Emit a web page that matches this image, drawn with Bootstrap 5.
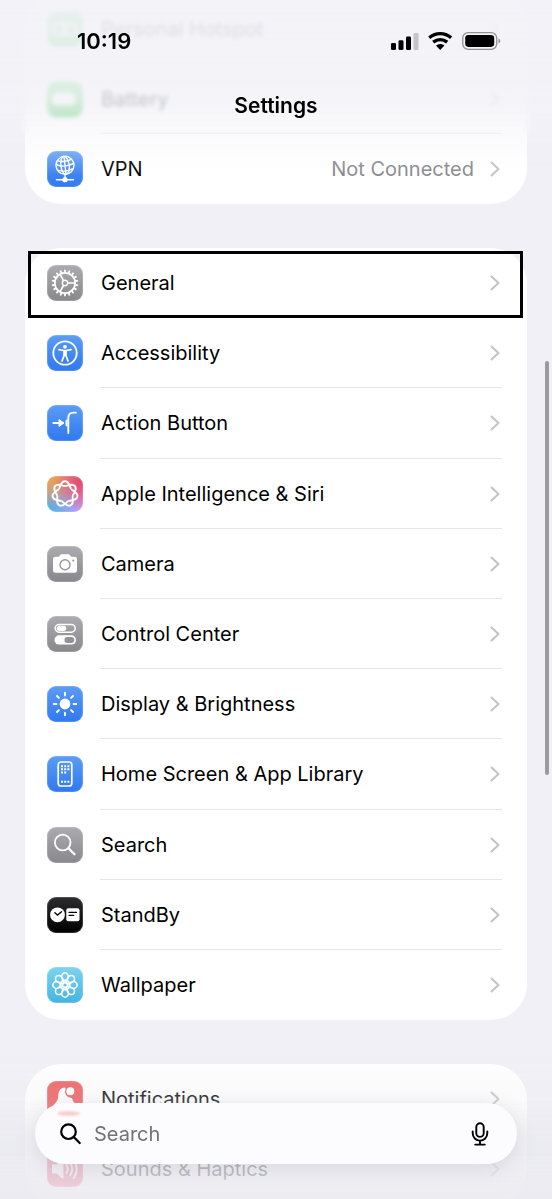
<!DOCTYPE html>
<html lang="en">
<head>
<meta charset="utf-8">
<meta name="viewport" content="width=device-width, initial-scale=1">
<title>Settings</title>
<link rel="stylesheet" href="https://cdn.jsdelivr.net/npm/bootstrap@5.3.0/dist/css/bootstrap.min.css">
<style>
  body { background: #f0f0f6; color: #000; font-family: Inter, "Liberation Sans", sans-serif; font-size: 20px; line-height: 28px; }
  .screen { height: 100vh; overflow: hidden; }
  .groups { padding: 0 25px; gap: 44px; }
  .scrolled { margin-top: -6px; }
  .group { border-radius: 36px; flex: none; background: #fff; }
  .group-main { min-height: 772px; }
  .setting { flex: 1 0 70px; padding-left: 22px; padding-right: 25px; gap: 18px; color: #000; text-decoration: none; position: relative; }
  .setting + .setting::before { content: ""; position: absolute; top: -1px; left: 75px; right: 25px; height: 1px; background: #e6e6e8; }
  .value { color: #8a8a8e; margin-right: -2px; }
  .tile { width: 36px; height: 36px; border-radius: 9px; flex: none; box-shadow: inset 0 0 1px 1px rgba(255,255,255,.18); }
  .tile svg { width: 36px; height: 36px; display: block; }
  .t-blue { background: linear-gradient(#5b9cf6, #2f78f0); }
  .t-gray { background: linear-gradient(#acacb0, #88888c); }
  .t-green { background: linear-gradient(#6ad878, #35c14b); }
  .t-black { background: linear-gradient(#2c2c2e, #000); }
  .t-cyan { background: linear-gradient(#7dd3f0, #43b5e0); }
  .t-red { background: linear-gradient(#ec5a5c, #ee4b4e); }
  .t-pink { background: linear-gradient(#f0506e, #ee3a5e); }
  .t-ai { background: radial-gradient(circle at 100% 15%, #e93f68 0, rgba(233,63,104,0) 62%), radial-gradient(circle at 10% 0, #f2a040 0, rgba(242,160,64,0) 65%), radial-gradient(circle at 0 100%, #43b4f3 0, rgba(67,180,243,0) 70%), radial-gradient(circle at 80% 100%, #c79bfa 0, rgba(199,155,250,0) 65%), #cf98b4; }
  .chev { width: 10px; height: 16px; flex: none; margin-right: 2px; }
  .focus-box { position: absolute; top: 3px; right: 4px; bottom: 0; left: 3px; border: 3px solid #000; z-index: 2; }
  .top-blur { height: 134px; backdrop-filter: blur(2px); z-index: 3; }
  .top-fade { height: 175px; z-index: 3; background: linear-gradient(rgba(242,242,247,.93) 0, rgba(242,242,247,.88) 80px, rgba(243,243,248,.76) 112px, rgba(243,243,248,.42) 130px, rgba(244,244,248,0)); }
  .top-bar { z-index: 4; }
  .status { height: 82px; padding: 0 51px 0 77px; }
  .clock { font-size: 22px; font-weight: 600; }
  .page-title { font-size: 21px; line-height: 28px; font-weight: 600; margin-top: 10px; }
  .bottom-fade { height: 150px; z-index: 3; background: linear-gradient(rgba(234,234,240,0), rgba(236,236,240,.26) 50px, rgba(232,232,238,.72) 98px, rgba(235,235,240,.88)); }
  .search-wrap { z-index: 4; padding: 0 35px 35px; }
  .search-pill { height: 61px; border-radius: 31px; background: #fcfcfe; padding: 0 27px 0 25px; gap: 13px; box-shadow: 0 4px 20px rgba(70,70,90,.13); position: relative; }
  .search-pill::before { content: ""; position: absolute; left: 22px; top: 8px; width: 23px; height: 5px; border-radius: 50%; background: #f9ccd0; filter: blur(1px); }
  .search-field { border: 0; background: transparent; outline: 0; padding: 0; min-width: 0; color: #727277; }
  .search-field::placeholder { color: #727277; opacity: 1; }
  .scroll-thumb { top: 361px; right: 3px; width: 4px; height: 414px; border-radius: 2px; background: #9b9b9f; z-index: 2; }
</style>
</head>
<body>
<svg width="0" height="0" class="position-absolute" aria-hidden="true">
  <defs>
    <symbol id="chev" viewBox="0 0 10 16"><path d="M1.5 1.5 8.500 8l-7 6.500" fill="none" stroke="#c3c3c7" stroke-width="2" stroke-linecap="round" stroke-linejoin="round"/></symbol>
    <path id="lobe" d="M-6.200-5C-4.400-7.300-4.400-12.700 0-12.700S4.400-7.300 6.200-5"/>
    <g id="petal"><path d="M-.8-2.400-2.400-6.500A3.300 3.300 0 1 1 2.400-6.500L.8-2.400"/><circle cy="-4.600" r=".5"/></g>
    <path id="teeth" d="M0-13.300V-10.500"/>
    <path id="ray" d="M0-11.300V-8.600"/>
  </defs>
</svg>

<main class="screen position-relative">
  <div class="groups d-flex flex-column">
    <nav class="group scrolled d-flex flex-column" aria-label="Connections">
      <a href="#" class="setting d-flex align-items-center">
        <span class="tile t-green"><svg viewBox="0 0 36 36" fill="none" stroke="#fff" stroke-width="2.400"><rect x="6" y="13" width="14" height="10" rx="5"/><rect x="16" y="13" width="14" height="10" rx="5"/></svg></span>
        <span class="flex-grow-1">Personal Hotspot</span><svg class="chev"><use href="#chev"/></svg></a>
      <a href="#" class="setting d-flex align-items-center">
        <span class="tile t-green"><svg viewBox="0 0 36 36" fill="#fff"><rect x="5" y="12" width="23" height="12" rx="4"/><rect x="29" y="16" width="2" height="4" rx="1"/></svg></span>
        <span class="flex-grow-1">Battery</span><svg class="chev"><use href="#chev"/></svg></a>
      <a href="#" class="setting d-flex align-items-center">
        <span class="tile t-blue"><svg viewBox="0 0 36 36" fill="none" stroke="#fff" stroke-width="1.400" stroke-linecap="round"><circle cx="18" cy="14.300" r="9"/><ellipse cx="18" cy="14.300" rx="4.200" ry="9" transform="rotate(-8 18 14.300)"/><path d="M17 5.400 19 23.200M9.200 13.500c5 2.500 12 1.500 17.400-1M10.400 9.600c4 1.600 10 1 13.600-1.300M11.200 19.400c5 1.300 10 .8 14-1.600M18 23.500V28M9.500 28.700h17"/><circle cx="18" cy="28.700" r="1.900" fill="#fff"/></svg></span>
        <span class="flex-grow-1">VPN</span><span class="value">Not Connected</span><svg class="chev"><use href="#chev"/></svg></a>
    </nav>

    <nav class="group group-main d-flex flex-column" aria-label="Device">
      <a href="#" class="setting d-flex align-items-center" aria-current="true">
        <span class="tile t-gray"><svg viewBox="-18 -18 36 36" fill="none" stroke="#fff" stroke-width="1.800"><circle r="10.200"/><circle r="2.700" stroke-width="1.400"/><path d="M2.700 0h7.500M-1.400-2.300-5.100-8.800M-1.400 2.300-5.100 8.800" stroke-width="1.700"/>
          <g><use href="#teeth"/><use href="#teeth" transform="rotate(20)"/><use href="#teeth" transform="rotate(40)"/><use href="#teeth" transform="rotate(60)"/><use href="#teeth" transform="rotate(80)"/><use href="#teeth" transform="rotate(100)"/><use href="#teeth" transform="rotate(120)"/><use href="#teeth" transform="rotate(140)"/><use href="#teeth" transform="rotate(160)"/><use href="#teeth" transform="rotate(180)"/><use href="#teeth" transform="rotate(200)"/><use href="#teeth" transform="rotate(220)"/><use href="#teeth" transform="rotate(240)"/><use href="#teeth" transform="rotate(260)"/><use href="#teeth" transform="rotate(280)"/><use href="#teeth" transform="rotate(300)"/><use href="#teeth" transform="rotate(320)"/><use href="#teeth" transform="rotate(340)"/></g></svg></span>
        <span class="flex-grow-1">General</span><svg class="chev"><use href="#chev"/></svg><span class="focus-box"></span></a>
      <a href="#" class="setting d-flex align-items-center">
        <span class="tile t-blue"><svg viewBox="0 0 36 36"><circle cx="18" cy="18" r="11.700" fill="none" stroke="#fff" stroke-width="1.800"/><circle cx="18" cy="11.800" r="1.900" fill="#fff"/><path d="M12 14.600 16.600 15.500H19.400L24 14.600M18 15.800v4.600M17 16v4.600L15 26M19 16v4.600L21 26" fill="none" stroke="#fff" stroke-width="1.700" stroke-linecap="round" stroke-linejoin="round"/></svg></span>
        <span class="flex-grow-1">Accessibility</span><svg class="chev"><use href="#chev"/></svg></a>
      <a href="#" class="setting d-flex align-items-center">
        <span class="tile t-blue"><svg viewBox="0 0 36 36"><path d="M6.300 18H13M29 7.600h-2.300c-3.600 0-5.400 1.900-5.400 5.400v15" fill="none" stroke="#fff" stroke-width="1.900" stroke-linecap="round"/><path d="M12 14.600 17 18l-5 3.400z" fill="#fff" stroke="#fff" stroke-linejoin="round"/><path d="M20.500 14.300c-2 .3-2 1-2 3.700s0 3.400 2 3.700z" fill="#fff"/></svg></span>
        <span class="flex-grow-1">Action Button</span><svg class="chev"><use href="#chev"/></svg></a>
      <a href="#" class="setting d-flex align-items-center">
        <span class="tile t-ai"><svg viewBox="-18 -18 36 36" fill="none" stroke="#fff" stroke-width="1.900"><use href="#lobe"/><use href="#lobe" transform="rotate(51.43)"/><use href="#lobe" transform="rotate(102.86)"/><use href="#lobe" transform="rotate(154.29)"/><use href="#lobe" transform="rotate(205.71)"/><use href="#lobe" transform="rotate(257.14)"/><use href="#lobe" transform="rotate(308.57)"/></svg></span>
        <span class="flex-grow-1">Apple Intelligence &amp; Siri</span><svg class="chev"><use href="#chev"/></svg></a>
      <a href="#" class="setting d-flex align-items-center">
        <span class="tile t-gray"><svg viewBox="0 0 36 36"><path d="M8.500 10.800h3.300l1.300-1.800c.4-.5.900-.8 1.500-.8h6.800c.6 0 1.100.3 1.500.8l1.300 1.800h3.300a2.500 2.500 0 0 1 2.500 2.500v11a2.500 2.500 0 0 1-2.500 2.500h-19a2.500 2.500 0 0 1-2.500-2.500v-11a2.500 2.500 0 0 1 2.500-2.500z" fill="#fff"/><circle cx="18" cy="18.700" r="5" fill="none" stroke="#98989c" stroke-width="1.400"/><circle cx="26.300" cy="14.500" r="1.100" fill="#98989c"/></svg></span>
        <span class="flex-grow-1">Camera</span><svg class="chev"><use href="#chev"/></svg></a>
      <a href="#" class="setting d-flex align-items-center">
        <span class="tile t-gray"><svg viewBox="0 0 36 36"><rect x="8.200" y="8.400" width="20" height="7.800" rx="3.900" fill="none" stroke="#fff" stroke-width="1.500"/><rect x="9.700" y="9.700" width="9.500" height="5.200" rx="2.600" fill="#fff"/><rect x="7.500" y="19.300" width="21.500" height="9.200" rx="4.600" fill="#fff"/><rect x="17.500" y="20.900" width="9.800" height="6" rx="3" fill="#919195"/></svg></span>
        <span class="flex-grow-1">Control Center</span><svg class="chev"><use href="#chev"/></svg></a>
      <a href="#" class="setting d-flex align-items-center">
        <span class="tile t-blue"><svg viewBox="-18 -18 36 36" stroke="#fff" stroke-width="1.900" stroke-linecap="round"><circle r="5.400" fill="#fff" stroke="none"/><use href="#ray"/><use href="#ray" transform="rotate(45)"/><use href="#ray" transform="rotate(90)"/><use href="#ray" transform="rotate(135)"/><use href="#ray" transform="rotate(180)"/><use href="#ray" transform="rotate(225)"/><use href="#ray" transform="rotate(270)"/><use href="#ray" transform="rotate(315)"/></svg></span>
        <span class="flex-grow-1">Display &amp; Brightness</span><svg class="chev"><use href="#chev"/></svg></a>
      <a href="#" class="setting d-flex align-items-center">
        <span class="tile t-blue"><svg viewBox="0 0 36 36"><rect x="11.200" y="6" width="13.600" height="24" rx="2.800" fill="none" stroke="#fff" stroke-width="1.700"/><path d="M14 10.200h8.500M14 13.300h8.500M14 16.400h5.400M14 25.800h8.500" stroke="#fff" stroke-width="2" stroke-dasharray="2 1.200"/></svg></span>
        <span class="flex-grow-1">Home Screen &amp; App Library</span><svg class="chev"><use href="#chev"/></svg></a>
      <a href="#" class="setting d-flex align-items-center">
        <span class="tile t-gray"><svg viewBox="0 0 36 36" fill="none" stroke="#fff" stroke-linecap="round"><circle cx="15.700" cy="15.500" r="7.800" stroke-width="1.800"/><path d="m21.500 21.300 6 6" stroke-width="2.300"/></svg></span>
        <span class="flex-grow-1">Search</span><svg class="chev"><use href="#chev"/></svg></a>
      <a href="#" class="setting d-flex align-items-center">
        <span class="tile t-black"><svg viewBox="0 0 36 36"><circle cx="10.500" cy="17.800" r="7.400" fill="#fff"/><path d="m7.900 15.800 2.600 2.200 4-3.200" fill="none" stroke="#000" stroke-width="1.400" stroke-linecap="round"/><rect x="19.300" y="11.300" width="13.200" height="13" rx="2" fill="#fff"/><path d="M22 15.300h7.500M22 18.300h4.800" stroke="#000" stroke-width="1.300" stroke-linecap="round"/></svg></span>
        <span class="flex-grow-1">StandBy</span><svg class="chev"><use href="#chev"/></svg></a>
      <a href="#" class="setting d-flex align-items-center">
        <span class="tile t-cyan"><svg viewBox="-18 -18 36 36" fill="none" stroke="#fff" stroke-width="1.400"><use href="#petal"/><use href="#petal" transform="rotate(45)"/><use href="#petal" transform="rotate(90)"/><use href="#petal" transform="rotate(135)"/><use href="#petal" transform="rotate(180)"/><use href="#petal" transform="rotate(225)"/><use href="#petal" transform="rotate(270)"/><use href="#petal" transform="rotate(315)"/><circle r="2.300"/></svg></span>
        <span class="flex-grow-1">Wallpaper</span><svg class="chev"><use href="#chev"/></svg></a>
    </nav>

    <nav class="group d-flex flex-column" aria-label="Alerts">
      <a href="#" class="setting d-flex align-items-center">
        <span class="tile t-red"><svg viewBox="0 0 36 36"><path d="M18 6.500c-4.700 0-6.500 4-6.700 7.500-.3 5-1.300 6.500-4.300 9.500-1.600 1.700-.9 3 .9 3h20.200c1.800 0 2.500-1.300.9-3-2.500-2.500-3.500-4-4-6.500a6.300 6.300 0 0 1-6.300-9z" fill="#fff"/><circle cx="23.300" cy="10.300" r="4" fill="#fff"/><path d="M14.500 28.500h7a3.500 3 0 0 1-7 0z" fill="#fff"/></svg></span>
        <span class="flex-grow-1">Notifications</span><svg class="chev"><use href="#chev"/></svg></a>
      <a href="#" class="setting d-flex align-items-center">
        <span class="tile t-pink"><svg viewBox="0 0 36 36" fill="none" stroke="#fff" stroke-width="1.900" stroke-linecap="round"><path d="M6 14.500h4l5.500-5v17l-5.500-5H6z" fill="#fff" stroke-linejoin="round"/><path d="M19.500 14c1.600 2.400 1.600 5.600 0 8M23 11.500c3 3.800 3 9.200 0 13M26.700 9c4 5.300 4 12.700 0 18"/></svg></span>
        <span class="flex-grow-1">Sounds &amp; Haptics</span><svg class="chev"><use href="#chev"/></svg></a>
    </nav>
  </div>
</main>

<div class="top-blur fixed-top pe-none"></div>
<div class="top-fade fixed-top pe-none"></div>
<header class="top-bar fixed-top">
  <div class="status d-flex align-items-center justify-content-between">
    <time class="clock">10:19</time>
    <svg width="110" height="20" viewBox="0 0 110 20" role="img" aria-label="Signal, Wi-Fi, battery">
      <rect x="0" y="12" width="5" height="7" rx="1.300"/><rect x="7.500" y="9.300" width="5" height="9.700" rx="1.300"/><rect x="15" y="5.600" width="5" height="13.400" rx="1.300"/><rect x="22.500" y="2" width="5" height="17" rx="1.300" fill="#c4c4c8"/>
      <path d="M38.300 6.700c6.600-5.400 15.200-5.400 21.800 0M42.200 11.200c4.200-3.300 9.800-3.300 14 0" fill="none" stroke="#000" stroke-width="3.400"/><path d="M45 14.500c2.600-2 5.800-2 8.400 0L49.200 19z"/>
      <rect x="71.700" y="1.700" width="34" height="16.600" rx="5.500" fill="none" stroke="#929296" stroke-width="1.300"/><rect x="74.200" y="4.100" width="29" height="11.800" rx="3.300"/><path d="M107.500 7.500c2.300.8 2.300 4.200 0 5z" fill="#929296"/>
    </svg>
  </div>
  <h1 class="page-title text-center mb-0">Settings</h1>
</header>

<div class="bottom-fade fixed-bottom pe-none"></div>
<div class="search-wrap fixed-bottom">
  <form class="search-pill d-flex align-items-center" role="search">
    <svg width="21" height="22" viewBox="0 0 21 22" fill="none" stroke="#000" stroke-width="2.200" stroke-linecap="round" class="flex-shrink-0" aria-hidden="true"><circle cx="8.500" cy="8.700" r="7.300"/><path d="m14 14.300 5.700 5.700"/></svg>
    <input id="q" class="search-field flex-grow-1" type="text" placeholder="Search" aria-label="Search settings">
    <button type="button" class="btn p-0 border-0 d-flex" aria-label="Dictate"><svg width="20" height="24" viewBox="0 0 20 24" fill="none" stroke="#000" stroke-width="1.900" stroke-linecap="round"><rect x="6.300" y="1.300" width="7.400" height="13.600" rx="3.700"/><path d="M2.700 9.500v1.800a7.300 7.300 0 0 0 14.600 0V9.500M10 18.700v3.500M5.200 22.600h9.600"/></svg></button>
  </form>
</div>
<div class="scroll-thumb position-fixed"></div>
<script src="https://cdn.jsdelivr.net/npm/bootstrap@5.3.0/dist/js/bootstrap.bundle.min.js"></script>
</body>
</html>
